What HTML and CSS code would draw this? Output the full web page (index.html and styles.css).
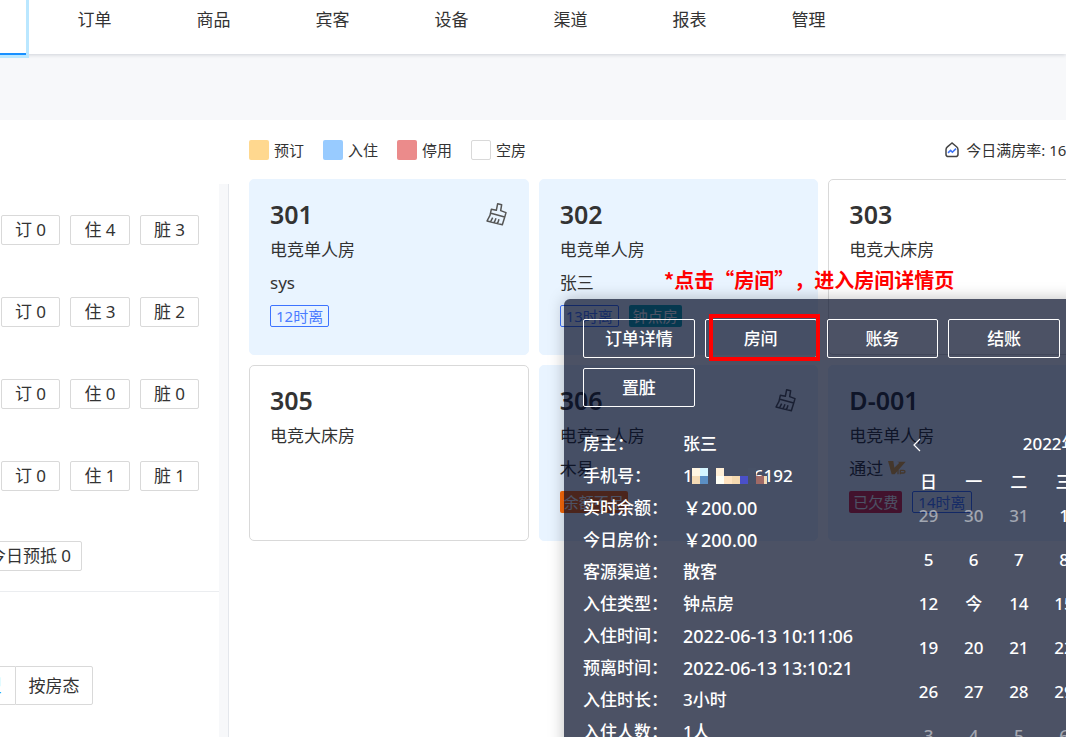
FILE: index.html
```html
<!DOCTYPE html>
<html lang="zh-CN">
<head>
<meta charset="utf-8">
<title>房态</title>
<link rel="stylesheet" href="styles.css">
</head>
<body>
<svg class="defs" width="0" height="0" aria-hidden="true">
  <symbol id="brush" viewBox="0 0 63 72">
    <path d="M35 5l12 3-3 18 16 6-4 14-7 22L3 57l9-17 4-18 15 3zM15 34l41 11M14 59l6-12M25 61l5-12M35 64l4-12" fill="none" stroke="#555" stroke-width="4.5" stroke-linejoin="round"/>
  </symbol>
</svg>
<div class="page">
  <header class="topbar">
    <a class="tab-active" href="#" aria-label="房态"></a>
    <nav class="nav">
      <a href="#">订单</a><a href="#">商品</a><a href="#">宾客</a><a href="#">设备</a><a href="#">渠道</a><a href="#">报表</a><a href="#">管理</a>
    </nav>
  </header>
  <div class="band"></div>
  <div class="content">
    <aside class="side">
      <div class="side-body">
        <div class="counts">
          <div class="row"><button>订 0</button><button>住 4</button><button>脏 3</button></div>
          <div class="row"><button>订 0</button><button>住 3</button><button>脏 2</button></div>
          <div class="row"><button>订 0</button><button>住 0</button><button>脏 0</button></div>
          <div class="row"><button>订 0</button><button>住 1</button><button>脏 1</button></div>
        </div>
        <div class="arrive"><button>今日预抵 0</button></div>
        <div class="switch"><button class="on">按房型</button><button>按房态</button></div>
      </div>
    </aside>
    <main class="main">
      <div class="tools">
        <ul class="legend">
          <li><i class="sw book"></i>预订</li>
          <li><i class="sw stay"></i>入住</li>
          <li><i class="sw stop"></i>停用</li>
          <li><i class="sw free"></i>空房</li>
        </ul>
        <div class="rate">
          <svg width="14" height="16" viewBox="0 0 14 16" fill="none" aria-hidden="true"><path d="M7 1 2.4 4.8Q1 6 1 7.8v4.4q0 2.4 2.4 2.4h7.200q2.400 0 2.400-2.400V7.800q0-1.800-1.400-3z" stroke="#444" stroke-width="1.5"/><path d="M3 10.800 5.600 8.400l1.800 1.800 3.600-3.600" stroke="#3d73f5" stroke-width="1.600"/></svg>
          <span>今日满房率: 16.67%</span>
        </div>
      </div>
      <div class="cards">
        <section class="card taken"><svg class="brush"><use href="#brush"/></svg><h2>301</h2><p>电竞单人房</p><p>sys</p><div class="tags"><span class="tag line">12时离</span></div></section>
        <section class="card taken"><h2>302</h2><p>电竞单人房</p><p>张三</p><div class="tags"><span class="tag line">13时离</span><span class="tag teal">钟点房</span></div></section>
        <section class="card"><h2>303</h2><p>电竞大床房</p></section>
        <section class="card"><h2>305</h2><p>电竞大床房</p></section>
        <section class="card taken"><svg class="brush"><use href="#brush"/></svg><h2>306</h2><p>电竞三人房</p><p>木易</p><div class="tags"><span class="tag orange">余额不足</span></div></section>
        <section class="card taken"><h2>D-001</h2><p>电竞单人房</p><p>通过 <svg class="vip" viewBox="0 0 54 42" role="img" aria-label="VIP"><path d="M0 0h16l3 20L34 5l-6-3h25L20 40h-9z" fill="#e3a341"/><path d="M30 26v14M37 40V28h9q5 0 5 4t-5 4h-8" fill="none" stroke="#e3a341" stroke-width="4"/></svg></p><div class="tags"><span class="tag red">已欠费</span><span class="tag line">14时离</span></div></section>
      </div>
    </main>
  </div>

  <div class="pop">
    <div class="actions"><button>订单详情</button><button>房间</button><button>账务</button><button>结账</button><button>置脏</button></div>
    <div class="detail">
      <dl class="info">
        <dt>房主：</dt><dd>张三</dd>
        <dt>手机号：</dt><dd class="phone">1<span class="hidden-part"></span>6192
          <svg class="mosaic" width="76" height="16" viewBox="0 0 76 16" shape-rendering="crispEdges" aria-hidden="true"><path fill="#fff6e3" d="M0 0h8v8H0z"/><path fill="#d5f5ff" d="M8 0h8v8H8z"/><path fill="#ffefd6" d="M24 0h8v8h-8z"/><path fill="#475167" d="M56 0h8v8h-8z"/><path fill="#f3dab5" d="M0 8h8v8H0z"/><path fill="#5b8fc4" d="M8 8h8v8H8z"/><path fill="#fffff5" d="M24 8h8v8h-8z"/><path fill="#ffe3c0" d="M32 8h8v8h-8z"/><path fill="#f5d9b0" d="M40 8h8v8h-8z"/><path fill="#4a50c8" d="M48 8h8v8h-8z"/><path fill="#475167" d="M56 8h8v8h-8z"/><path fill="#a06a66" d="M64 8h8v8h-8z"/><path fill="#f3dab5" d="M72 8h3v8h-3z"/></svg></dd>
        <dt>实时余额：</dt><dd class="num">￥200.00</dd>
        <dt>今日房价：</dt><dd class="num">￥200.00</dd>
        <dt>客源渠道：</dt><dd>散客</dd>
        <dt>入住类型：</dt><dd>钟点房</dd>
        <dt>入住时间：</dt><dd class="num">2022-06-13 10:11:06</dd>
        <dt>预离时间：</dt><dd class="num">2022-06-13 13:10:21</dd>
        <dt>入住时长：</dt><dd>3小时</dd>
        <dt>入住人数：</dt><dd>1人</dd>
      </dl>
      <div class="cal">
        <div class="cal-head"><button aria-label="上个月"><svg width="9" height="14" viewBox="0 0 9 14"><path d="M8 1 2 7l6 6" fill="none" stroke="#fff" stroke-width="1.2"/></svg></button><span>2022年6月</span></div>
        <table>
          <thead><tr><th>日</th><th>一</th><th>二</th><th>三</th><th>四</th><th>五</th><th>六</th></tr></thead>
          <tbody>
            <tr><td class="dim">29</td><td class="dim">30</td><td class="dim">31</td><td>1</td><td>2</td><td>3</td><td>4</td></tr>
            <tr><td>5</td><td>6</td><td>7</td><td>8</td><td>9</td><td>10</td><td>11</td></tr>
            <tr><td>12</td><td>今</td><td>14</td><td>15</td><td>16</td><td>17</td><td>18</td></tr>
            <tr><td>19</td><td>20</td><td>21</td><td>22</td><td>23</td><td>24</td><td>25</td></tr>
            <tr><td>26</td><td>27</td><td>28</td><td>29</td><td>30</td><td class="dim">1</td><td class="dim">2</td></tr>
            <tr class="dim"><td>3</td><td>4</td><td>5</td><td>6</td><td>7</td><td>8</td><td>9</td></tr>
          </tbody>
        </table>
      </div>
    </div>
  </div>
  <div class="mark"></div>
  <div class="note">*点击“房间”，进入房间详情页</div>
</div>
</body>
</html>
```
FILE: styles.css
```css
* { box-sizing: border-box; }
body { margin: 0; color: #333; background: #fff; font: 17px/24px "Noto Sans", "Noto Sans CJK SC", sans-serif; }
.defs { position: absolute; }
.page { position: relative; height: 100vh; overflow: hidden; display: flex; flex-direction: column; }
h2, p, ul, dl, dd { margin: 0; padding: 0; }
button { font: inherit; color: inherit; background: none; white-space: nowrap; cursor: pointer; padding: 0; border: 1px solid #d9d9d9; border-radius: 2px; }

.topbar { flex: none; display: flex; height: 54px; background: #fff; position: relative; box-shadow: 0 1px 4px rgba(0, 21, 41, 0.16); }
.tab-active { width: 26px; height: 55px; border-bottom: 2px solid #1890ff; box-shadow: 0 0 0 3px #bae7ff; background: #fff; }
.nav { display: flex; margin-left: 9px; }
.nav a { width: 119px; padding-top: 8px; text-align: center; color: #333; text-decoration: none; }
.band { flex: none; height: 66px; background: #f7f8fa; }

.content { flex: 1; display: flex; min-height: 0; }
.side { flex: none; width: 229px; margin-top: 64px; background: #f7f8fa; border-right: 1px solid #e4e7ec; padding-right: 9px; }
.side-body { height: 100%; background: #fff; padding-top: 31px; overflow: hidden; }
.counts { display: grid; gap: 52px; padding-left: 1px; }
.row { display: flex; gap: 10px; }
.row button { width: 60px; height: 30px; line-height: 28px; }
.row button:first-child, .row button:last-child { width: 59px; }
.arrive { margin-top: 50px; padding-bottom: 20px; border-bottom: 1px solid #ebedf0; }
.arrive button { height: 30px; width: 104px; margin-left: -22px; line-height: 28px; }
.switch { display: flex; margin: 74px 0 0 -64px; }
.switch button { width: 78px; height: 39px; border-radius: 0 2px 2px 0; }
.switch .on { width: 79px; color: #1890ff; border-radius: 2px 0 0 2px; border-right: 0; }

.main { flex: 1; min-width: 0; padding: 19px 0 0 20px; }
.tools { display: flex; height: 22px; align-items: center; font-size: 15px; line-height: 20px; white-space: nowrap; }
.legend { display: flex; gap: 19px; list-style: none; }
.legend li { display: flex; gap: 5px; align-items: center; }
.sw { width: 20px; height: 20px; border-radius: 2px; }
.book { background: #ffd88f; }
.stay { background: #98cbff; }
.stop { background: #eb8b8b; }
.free { border: 1px solid #d9d9d9; }
.rate { margin-left: auto; margin-right: -34px; display: flex; gap: 7px; align-items: center; }
.cards { display: grid; width: 859px; grid-template-columns: repeat(3, 1fr); grid-auto-rows: 176px; gap: 10px; margin-top: 18px; }
.card { position: relative; border: 1px solid #d9d9d9; border-radius: 5px; padding: 17px 20px; background: #fff; }
.taken { background: #e9f4ff; border-color: #e9f4ff; }
.card h2 { font-size: 25px; line-height: 34px; font-weight: 600; }
.card p { font-size: 17px; line-height: 24px; margin-top: 7px; }
.card p + p { margin-top: 9px; }
.brush { position: absolute; top: 22px; right: 21px; width: 21px; height: 24px; }
.vip { width: 18px; height: 14px; }
.tags { display: flex; gap: 10px; margin-top: 10px; }
.tag { height: 22px; padding: 0 4px; border-radius: 2px; font-size: 15px; line-height: 22px; color: #fff; }
.line { padding: 0 5px; line-height: 20px; color: #4b7cff; border: 1px solid #3d73ff; }
.teal { background: #13a8b5; }
.orange { background: #fa6a0a; }
.red { background: #dc2a44; }

.pop { position: absolute; left: 564px; top: 299px; width: 660px; padding: 20px 19px; color: #fff; font-weight: 500; background: rgba(0, 9, 36, 0.7); border-radius: 6px; box-shadow: 0 0 16px rgba(0, 0, 0, 0.25); }
.actions { display: grid; width: 477px; grid-template-columns: repeat(4, 1fr); gap: 10px; }
.actions button { height: 39px; border-color: #fff; }
.detail { display: flex; margin-top: 21px; }
.info { flex: none; display: grid; grid-template-columns: 100px 223px; grid-auto-rows: 32px; line-height: 32px; white-space: nowrap; }
.num { font-size: 18px; }
.phone { position: relative; }
.hidden-part { display: inline-block; width: 61px; }
.mosaic { position: absolute; left: 9px; top: 8px; }
.cal { flex: none; width: 316px; }
.cal-head { position: relative; text-align: center; line-height: 32px; }
.cal-head button { position: absolute; left: 6px; top: 10px; border: 0; display: flex; }
.cal table { width: 100%; table-layout: fixed; border-collapse: collapse; }
.cal th, .cal td { padding: 0; text-align: center; font-weight: 500; height: 44px; }
.cal th { height: 34px; padding-top: 9px; }
.cal .dim { color: rgba(255, 255, 255, 0.5); }

.mark { position: absolute; left: 709px; top: 314px; width: 111px; height: 47px; border: 4px solid #f00; }
.note { position: absolute; left: 664px; top: 265px; color: #f00; font: bold 20px/30px "Noto Sans CJK SC", sans-serif; white-space: nowrap; text-spacing-trim: space-all; }
```
